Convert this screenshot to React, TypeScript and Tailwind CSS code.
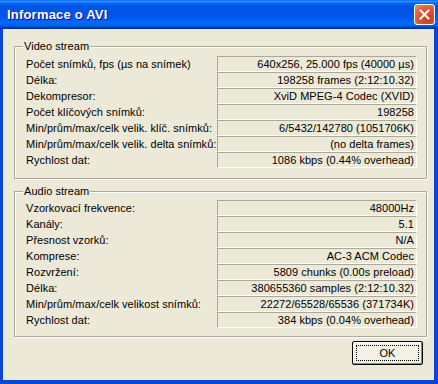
import React from 'react';

type Row = [string, string];

const video: Row[] = [
  ['Počet snímků, fps (µs na snímek)', '640x256, 25.000 fps (40000 µs)'],
  ['Délka:', '198258 frames (2:12:10.32)'],
  ['Dekompresor:', 'XviD MPEG-4 Codec (XVID)'],
  ['Počet klíčových snímků:', '198258'],
  ['Min/prům/max/celk velik. klíč. snímků:', '6/5432/142780 (1051706K)'],
  ['Min/prům/max/celk velik. delta snímků:', '(no delta frames)'],
  ['Rychlost dat:', '1086 kbps (0.44% overhead)'],
];

const audio: Row[] = [
  ['Vzorkovací frekvence:', '48000Hz'],
  ['Kanály:', '5.1'],
  ['Přesnost vzorků:', 'N/A'],
  ['Komprese:', 'AC-3 ACM Codec'],
  ['Rozvržení:', '5809 chunks (0.00s preload)'],
  ['Délka:', '380655360 samples (2:12:10.32)'],
  ['Min/prům/max/celk velikost snímků:', '22272/65528/65536 (371734K)'],
  ['Rychlost dat:', '384 kbps (0.04% overhead)'],
];

const Group: React.FC<{ title: string; rows: Row[]; className?: string }> = ({ title, rows, className }) => {
  return (
    <div
      className={`relative w-[413px] ml-[11px] border border-[#aca899] shadow-[inset_1px_1px_0_#fff,1px_1px_0_#fff] pl-[11px] pr-[9px] ${className ?? ''}`}
    >
      <span className="absolute left-[8px] -top-[8px] bg-[#ece9d8] px-[1px] leading-[14px]">{title}</span>
      {rows.map(([label, value], i) => (
        <div key={i} className="flex h-4 items-center">
          <div className="flex-1 whitespace-nowrap leading-[14px]">{label}</div>
          <div className="w-[200px] shrink-0 h-4 border-t border-l border-t-[#aca899] border-l-[#aca899] border-b border-r border-b-white border-r-white text-right pr-[2px] leading-[14px] whitespace-nowrap">
            {value}
          </div>
        </div>
      ))}
    </div>
  );
};

const App: React.FC = () => {
  return (
    <div className="w-[438px] h-[384px] flex flex-col bg-[#0b45d8] font-['Liberation_Sans',Arial,sans-serif] text-[11px] tracking-[0.04px] text-black">
      <div className="h-[29px] shrink-0 flex items-center justify-between pl-[7px] pr-[3px] bg-[linear-gradient(to_bottom,#0058ee_0%,#3593ff_4%,#288eff_6%,#127dff_8%,#036ffc_10%,#0262ee_14%,#0057e5_20%,#0054e3_24%,#0055eb_56%,#005bf5_66%,#026afe_76%,#0062ef_86%,#0052d6_92%,#0040ab_94%,#003092_100%)]">
        <span className="text-white font-bold text-[13px] tracking-[0.2px] [text-shadow:1px_1px_0_#0f1089]">Informace o AVI</span>
        <div className="w-[21px] h-[21px] rounded-[3px] border border-white bg-[radial-gradient(circle_at_70%_75%,#c9401f_0%,#dd5a36_55%,#ec9170_100%)] flex items-center justify-center">
          <svg width="11" height="11" viewBox="0 0 11 11">
            <path d="M1.5 1.5 L9.5 9.5 M9.5 1.5 L1.5 9.5" stroke="#fff" strokeWidth="2" strokeLinecap="square" />
          </svg>
        </div>
      </div>
      <div className="flex-1 ml-[3px] mr-[4px] mb-[4px] bg-[#ece9d8] pt-[17px] flex flex-col">
        <Group title="Video stream" rows={video} className="pt-[9px] pb-[10px]" />
        <Group title="Audio stream" rows={audio} className="mt-[12px] pt-[8px] pb-[8px]" />
        <div className="flex justify-end mt-[4px] pr-[11px]">
          <button className="w-[71px] h-[24px] rounded-[2px] border border-black bg-[#f3f1e6] shadow-[inset_-1px_-1px_0_#8e8c80,inset_1px_1px_0_#fff] p-[3px]">
            <div className="w-full h-full border border-dotted border-black flex items-center justify-center leading-[14px]">OK</div>
          </button>
        </div>
      </div>
    </div>
  );
};

export default App;
